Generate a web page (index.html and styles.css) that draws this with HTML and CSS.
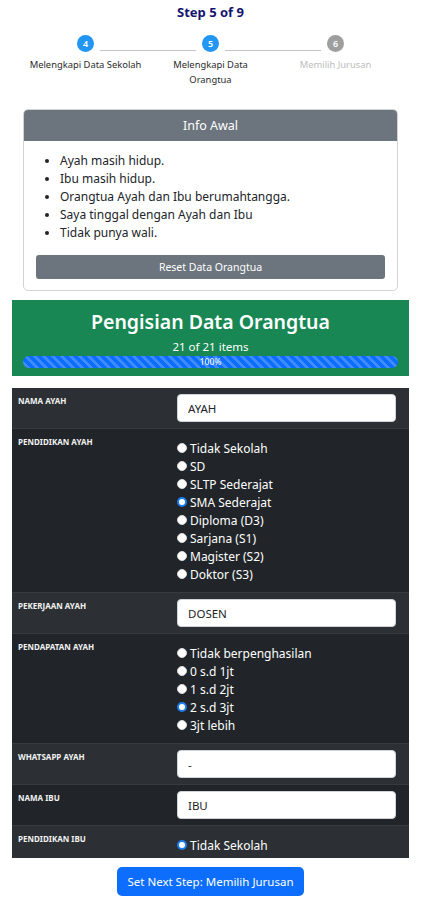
FILE: index.html
```html
<!DOCTYPE html>
<html lang="id">
<head>
<meta charset="utf-8">
<title>Step 5 of 9</title>
<link rel="stylesheet" href="styles.css">
</head>
<body>
<div class="page">
  <h1 class="step-title">Step 5 of 9</h1>
  <div class="stepper">
    <div class="step-track">
      <span class="dot done">4</span>
      <span class="line"></span>
      <span class="dot done">5</span>
      <span class="line"></span>
      <span class="dot todo">6</span>
    </div>
    <div class="step-labels">
      <div class="step-label">Melengkapi Data Sekolah</div>
      <div class="step-label wrap">Melengkapi Data Orangtua</div>
      <div class="step-label muted">Memilih Jurusan</div>
    </div>
  </div>

  <div class="card">
    <div class="card-header">Info Awal</div>
    <div class="card-body">
      <ul class="info-list">
        <li>Ayah masih hidup.</li>
        <li>Ibu masih hidup.</li>
        <li>Orangtua Ayah dan Ibu berumahtangga.</li>
        <li>Saya tinggal dengan Ayah dan Ibu</li>
        <li>Tidak punya wali.</li>
      </ul>
      <button class="btn-reset" type="button">Reset Data Orangtua</button>
    </div>
  </div>

  <div class="banner">
    <div class="banner-title">Pengisian Data Orangtua</div>
    <div class="banner-count">21 of 21 items</div>
    <div class="progress"><div class="progress-bar" style="width:100%">100%</div></div>
  </div>

  <div class="table-wrap">
    <table class="form-table">
      <tr class="odd">
        <td class="lbl">NAMA AYAH</td>
        <td class="val"><input class="field" type="text" value="AYAH"></td>
      </tr>
      <tr>
        <td class="lbl">PENDIDIKAN AYAH</td>
        <td class="val radios">
          <label class="opt"><input type="radio" name="pa"> Tidak Sekolah</label>
          <label class="opt"><input type="radio" name="pa"> SD</label>
          <label class="opt"><input type="radio" name="pa"> SLTP Sederajat</label>
          <label class="opt"><input type="radio" name="pa" checked> SMA Sederajat</label>
          <label class="opt"><input type="radio" name="pa"> Diploma (D3)</label>
          <label class="opt"><input type="radio" name="pa"> Sarjana (S1)</label>
          <label class="opt"><input type="radio" name="pa"> Magister (S2)</label>
          <label class="opt"><input type="radio" name="pa"> Doktor (S3)</label>
        </td>
      </tr>
      <tr class="odd">
        <td class="lbl">PEKERJAAN AYAH</td>
        <td class="val"><input class="field" type="text" value="DOSEN"></td>
      </tr>
      <tr>
        <td class="lbl">PENDAPATAN AYAH</td>
        <td class="val radios">
          <label class="opt"><input type="radio" name="pd"> Tidak berpenghasilan</label>
          <label class="opt"><input type="radio" name="pd"> 0 s.d 1jt</label>
          <label class="opt"><input type="radio" name="pd"> 1 s.d 2jt</label>
          <label class="opt"><input type="radio" name="pd" checked> 2 s.d 3jt</label>
          <label class="opt"><input type="radio" name="pd"> 3jt lebih</label>
        </td>
      </tr>
      <tr class="odd">
        <td class="lbl">WHATSAPP AYAH</td>
        <td class="val"><input class="field" type="text" value="-"></td>
      </tr>
      <tr>
        <td class="lbl">NAMA IBU</td>
        <td class="val"><input class="field" type="text" value="IBU"></td>
      </tr>
      <tr class="odd">
        <td class="lbl">PENDIDIKAN IBU</td>
        <td class="val radios">
          <label class="opt"><input type="radio" name="pi" checked> Tidak Sekolah</label>
        </td>
      </tr>
    </table>
  </div>

  <div class="actions">
    <button class="btn-next" type="button">Set Next Step: Memilih Jurusan</button>
  </div>
</div>
</body>
</html>
```

FILE: styles.css
```css
* { box-sizing: border-box; }

body {
  margin: 0;
  background: #fff;
  color: #212529;
  font-family: "Noto Sans", "Open Sans", sans-serif;
}

.page {
  padding: 0 13px 0 12px;
}

.step-title {
  margin: 0;
  padding-top: 4px;
  text-align: center;
  font-size: 13px;
  line-height: 16px;
  font-weight: 700;
  color: #14146e;
}

.stepper {
  width: 375px;
  margin: 15px auto 0;
}

.step-track {
  display: flex;
  align-items: flex-end;
  padding: 0 54px;
}

.dot {
  width: 17px;
  height: 17px;
  border-radius: 50%;
  display: flex;
  align-items: center;
  justify-content: center;
  color: #fff;
  font-size: 9px;
  font-weight: 600;
  flex: none;
}

.dot.done { background: #2196f3; }
.dot.todo { background: #9e9e9e; }

.line {
  flex: 1;
  height: 1px;
  margin: 0 6px 1px;
  background: #c4c4c4;
}

.step-labels {
  display: grid;
  grid-template-columns: repeat(3, 1fr);
  margin-top: 5px;
}

.step-label {
  padding: 0;
  text-align: center;
  font-size: 9.4px;
  line-height: 15px;
  color: #2b2b2b;
  white-space: nowrap;
}

.step-label.wrap {
  padding: 0 18px;
  white-space: normal;
}

.step-label.muted { color: #bdbdbd; }

.card {
  width: 375px;
  margin: 22px auto 0;
  border: 1px solid #d3d3d3;
  border-radius: 5px;
  overflow: hidden;
}

.card-header {
  height: 31px;
  line-height: 31px;
  background: #6c757d;
  color: #fff;
  text-align: center;
  font-size: 12.5px;
}

.card-body {
  padding: 11px 12px 11px 12px;
}

.info-list {
  margin: 0;
  padding-left: 24px;
  font-size: 12px;
  line-height: 18px;
  color: #212529;
}

.btn-reset {
  display: block;
  width: 100%;
  height: 24px;
  margin-top: 13px;
  border: 0;
  border-radius: 3px;
  background: #6c757d;
  color: #fff;
  font-family: inherit;
  font-size: 10.5px;
}

.banner {
  margin-top: 9px;
  padding: 10px 11px 8px;
  background: #198754;
  color: #fff;
  text-align: center;
}

.banner-title {
  font-size: 19.5px;
  line-height: 24px;
  font-weight: 600;
}

.banner-count {
  margin-top: 5px;
  font-size: 11.5px;
  line-height: 16px;
}

.progress {
  margin-top: 1px;
  height: 12px;
  border-radius: 6px;
  background: #e9ecef;
  overflow: hidden;
}

.progress-bar {
  height: 12px;
  background-color: #0d6efd;
  background-image: linear-gradient(45deg, rgba(255,255,255,.2) 25%, transparent 25%, transparent 50%, rgba(255,255,255,.2) 50%, rgba(255,255,255,.2) 75%, transparent 75%, transparent);
  background-size: 9px 9px;
  color: #fff;
  font-size: 8.5px;
  line-height: 12px;
  text-align: center;
}

.table-wrap {
  margin-top: 12px;
  height: 470px;
  overflow: hidden;
  background: #212529;
}

.form-table {
  width: 100%;
  border-collapse: collapse;
  color: #fff;
}

.form-table tr {
  background: #212529;
  border-bottom: 1px solid #373b3e;
}

.form-table tr.odd { background: #2c3034; }

.form-table td {
  vertical-align: top;
}

.lbl {
  width: 159px;
  padding: 8px 6px 6px 6px;
  font-size: 8px;
  line-height: 10px;
  font-weight: 700;
  color: #f2f2f2;
}

.val {
  padding: 6px 13px 6px 6px;
}

.field {
  display: block;
  width: 100%;
  height: 28px;
  padding: 0 10px;
  border: 1px solid #ced4da;
  border-radius: 4px;
  background: #fff;
  color: #212529;
  font-family: inherit;
  font-size: 11.5px;
}

.val.radios {
  padding: 10px 13px 9px 6px;
}

.opt {
  display: flex;
  align-items: center;
  gap: 3px;
  height: 18px;
  font-size: 12px;
  color: #fff;
}

.opt input {
  appearance: none;
  -webkit-appearance: none;
  margin: 0;
  width: 10px;
  height: 10px;
  border-radius: 50%;
  background: #fff;
  border: 1px solid #d8d8d8;
  flex: none;
}

.opt input:checked {
  border: 2px solid #1a7cf0;
  background: #fff;
}

.actions {
  display: flex;
  justify-content: center;
  margin-top: 9px;
}

.btn-next {
  height: 29px;
  padding: 0 10px;
  border: 0;
  border-radius: 5px;
  background: #0d6efd;
  color: #fff;
  font-family: inherit;
  font-size: 11.5px;
}
```
